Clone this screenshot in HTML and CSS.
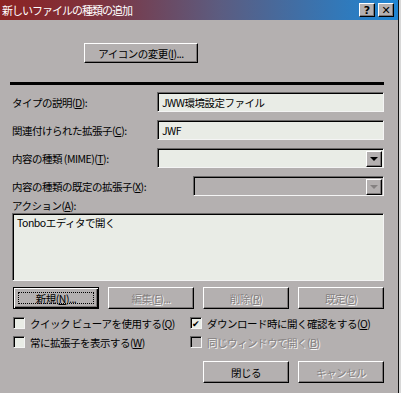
FILE: index.html
```html
<!DOCTYPE html>
<html lang="ja">
<head>
<meta charset="utf-8">
<title>新しいファイルの種類の追加</title>
<link rel="stylesheet" href="styles.css">
</head>
<body>
<div class="window">
    <div class="titlebar">
        <span class="title">新しいファイルの種類の追加</span>
        <div class="caption-btns">
            <span class="cap-btn">?</span>
            <span class="cap-btn">✕</span>
        </div>
    </div>
    <div class="content">
        <div class="icon-row">
            <button class="btn btn-icon">アイコンの変更(<u>I</u>)...</button>
        </div>
        <div class="sep"></div>

        <div class="field-row first">
            <label>タイプの説明(<u>D</u>):</label>
            <div class="edit">JWW環境設定ファイル</div>
        </div>
        <div class="field-row">
            <label>関連付けられた拡張子(<u>C</u>):</label>
            <div class="edit">JWF</div>
        </div>
        <div class="field-row">
            <label>内容の種類 (MIME)(<u>T</u>):</label>
            <div class="edit combo"><span></span><span class="drop"><i></i></span></div>
        </div>
        <div class="field-row">
            <label class="wide">内容の種類の既定の拡張子(<u>X</u>):</label>
            <div class="edit combo off"><span></span><span class="drop"><i></i></span></div>
        </div>

        <div class="action-label">アクション(<u>A</u>):</div>
        <div class="listbox">Tonboエディタで開く</div>

        <div class="btn-row">
            <button class="btn default"><span class="focus">新規(<u>N</u>)...</span></button>
            <button class="btn off">編集(<u>E</u>)...</button>
            <button class="btn off">削除(<u>R</u>)</button>
            <button class="btn off">既定(<u>S</u>)</button>
        </div>

        <div class="checks">
            <div class="check"><span class="box"></span>クイック ビューアを使用する(<u>Q</u>)</div>
            <div class="check"><span class="box">✔</span>ダウンロード時に開く確認をする(<u>O</u>)</div>
            <div class="check"><span class="box"></span>常に拡張子を表示する(<u>W</u>)</div>
            <div class="check off"><span class="box"></span>同じウィンドウで開く(<u>B</u>)</div>
        </div>

        <div class="bottom-row">
            <button class="btn close">閉じる</button>
            <button class="btn off">キャンセル</button>
        </div>
    </div>
</div>
</body>
</html>
```
FILE: styles.css
```css
* {box-sizing: border-box;}
body {margin: 0; background: #d8d8d8; font-family: "Noto Sans CJK JP", sans-serif; font-size: 10.5px; letter-spacing: -0.5px; color: #000;}
u {text-decoration: underline; text-underline-offset: 1px;}

.window {width: 399px; height: 393px; background: #b4b0b0; border-right: 1px solid #111; display: flex; flex-direction: column;}

.titlebar {height: 20px; display: flex; align-items: center; justify-content: space-between; padding: 0 4px 0 2px; color: #fff; font-size: 11px;
    background: linear-gradient(to right, #8c2222, #7e3440 25%, #5c5c80 55%, #1e86d4);}
.title {letter-spacing: -1px;}
.caption-btns {display: flex; gap: 3px;}
.cap-btn {width: 16px; height: 14px; background: #b4b0b0; border: 1px solid; border-color: #fff #000 #000 #fff; box-shadow: inset -1px -1px #7c7878;
    color: #000; font: bold 11px "DejaVu Sans", sans-serif; letter-spacing: 0; display: flex; align-items: center; justify-content: center; line-height: 1;}

.content {padding: 23px 14px 0 12px; display: flex; flex-direction: column;}

.btn {height: 22px; padding: 0; background: #b4b0b0; color: #000; font-family: inherit; font-size: 10.5px; letter-spacing: -0.5px;
    border: 1px solid; border-color: #fff #000 #000 #fff; box-shadow: inset -1px -1px #7c7878;
    display: flex; align-items: center; justify-content: center;}
.btn.off {color: #858181; text-shadow: 1px 1px 0 #f4f4f4;}
.btn.default {border-color: #000; box-shadow: inset 1px 1px #fff, inset -1px -1px #000, inset -2px -2px #7c7878;}
.focus {border: 1px dotted #000; width: calc(100% - 8px); height: calc(100% - 8px); display: flex; align-items: center; justify-content: center;}

.icon-row {padding-left: 72px;}
.btn-icon {width: 114px; height: 20px;}

.sep {margin: 19px 0 0 -2px; height: 3px; background: #000;}

.field-row {display: flex; align-items: center; height: 20px; margin-top: 8px;}
.field-row.first {margin-top: 7px;}
.field-row label {width: 145px; flex: none;}
.field-row label.wide {width: 181px;}

.edit {flex: 1; height: 20px; background: #e9ece6; padding: 0 4px; display: flex; align-items: center;
    border: 1px solid; border-color: #6a6868 #f4f4f4 #f4f4f4 #6a6868; box-shadow: inset 1px 1px #000;}
.combo {justify-content: space-between; padding: 2px 1px 1px 2px;}
.combo.off {background: #b4b0b0;}
.drop {width: 16px; height: 16px; background: #b4b0b0; border: 1px solid; border-color: #fff #000 #000 #fff; box-shadow: inset -1px -1px #7c7878;
    display: flex; align-items: center; justify-content: center;}
.drop i {width: 0; height: 0; border-left: 4px solid transparent; border-right: 4px solid transparent; border-top: 4px solid #000;}
.combo.off .drop i {border-top-color: #858181;}

.action-label {margin-top: 2px; height: 15px; line-height: 15px;}
.listbox {height: 68px; background: #e9ece6; padding: 1px 4px; border: 1px solid; border-color: #6a6868 #f4f4f4 #f4f4f4 #6a6868; box-shadow: inset 1px 1px #000;}

.btn-row {display: grid; grid-template-columns: repeat(4, 1fr); gap: 9px; margin-top: 6px; padding-left: 1px;}

.checks {display: grid; grid-template-columns: 177px 1fr; row-gap: 5px; margin-top: 7px; padding-left: 1px;}
.check {display: flex; align-items: center; height: 14px; white-space: nowrap;}
.check.off {color: #858181; text-shadow: 1px 1px 0 #f4f4f4;}
.box {width: 12px; height: 12px; flex: none; margin-right: 5px; background: #e9ece6; border: 1px solid; border-color: #6a6868 #f4f4f4 #f4f4f4 #6a6868;
    box-shadow: inset 1px 1px #000; font-size: 9px; letter-spacing: 0; line-height: 1; display: flex; align-items: center; justify-content: center; text-shadow: none;}
.check.off .box {background: #b4b0b0;}

.bottom-row {display: grid; grid-template-columns: repeat(4, 1fr); gap: 9px; margin-top: 12px; padding-left: 1px;}
.bottom-row .close {grid-column: 3;}
```
